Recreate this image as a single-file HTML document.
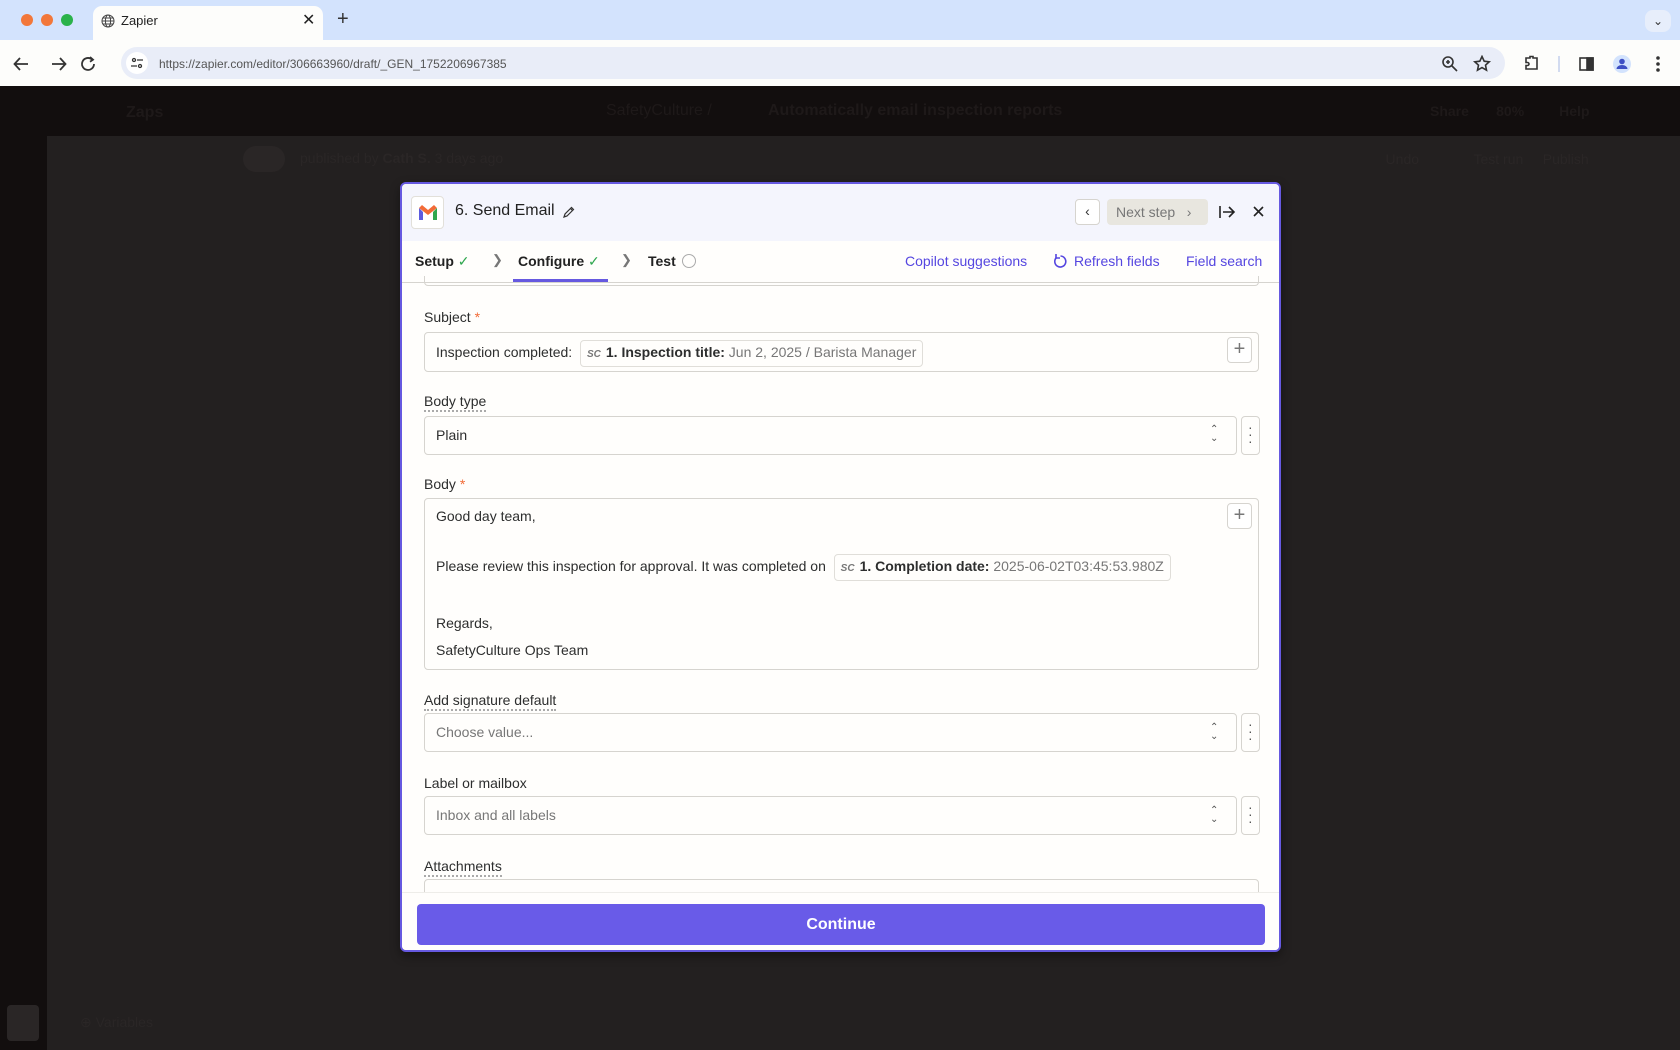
<!DOCTYPE html>
<html><head><meta charset="utf-8">
<style>
*{box-sizing:border-box;margin:0;padding:0}
body{width:1680px;height:1050px;overflow:hidden;font-family:"Liberation Sans",sans-serif;background:#232020;position:relative;color:#2d2e2e}
.abs{position:absolute}
.tabstrip{left:0;top:0;width:1680px;height:40px;background:#d3e3fd}
.tab{left:93px;top:6px;width:230px;height:34px;background:#fdfdfb;border-radius:9px 9px 0 0}
.dot{width:12px;height:12px;border-radius:50%;top:14px}
.toolbar{left:0;top:40px;width:1680px;height:46px;background:#fdfdfb}
.url{left:121px;top:47px;width:1384px;height:32px;background:#e9edf8;border-radius:16px}
.nav{left:0;top:86px;width:1680px;height:50px;background:#120e0e}
.side{left:0;top:86px;width:47px;height:964px;background:#120e0e}
.modal{left:400px;top:182px;width:881px;height:770px;background:#fffefc;border:2px solid #6659e0;border-radius:6px;overflow:hidden;box-shadow:0 4px 10px rgba(0,0,0,.4)}
.hdr{left:0;top:0;width:877px;height:57px;background:#f4f5fd}
.lbl{font-size:14px;color:#2d2e2e;left:22px}
.u{border-bottom:2px dotted #aaa;padding-bottom:1px}
.star{color:#f26b37}
.inp{left:22px;width:835px;border:1px solid #d6d4cf;border-radius:4px;background:#fffefc;font-size:14px}
.sel{width:813px}
.more{left:839px;width:19px;border:1px solid #d6d4cf;border-radius:4px;background:#fffefc}
.plus{width:25px;height:26px;border:1px solid #d6d4cf;border-radius:4px;background:#fff;color:#777;font-size:20px;line-height:22px;text-align:center}
.pill{display:inline-block;border:1px solid #e0ded9;border-radius:4px;padding:0 6px;font-size:14px;line-height:22px;background:#fffefc;vertical-align:middle}
.pill b{font-weight:bold;color:#2d2e2e}
.pill span{color:#777}
.sc{font-size:10px;font-weight:bold;font-style:italic;color:#3d3a8c;margin-right:5px}
.link{color:#5546e0;font-size:14px;top:69px}
.chev{color:#777;font-size:13px}
.bg{color:#1e1919}
</style></head><body>
<div class="abs tabstrip"></div>
<div class="abs dot" style="left:21px;background:#f2773a"></div>
<div class="abs dot" style="left:41px;background:#f2773a"></div>
<div class="abs dot" style="left:61px;background:#2ab24a"></div>
<div class="abs tab"></div>
<svg class="abs" style="left:101px;top:14px" width="14" height="14" viewBox="0 0 14 14" fill="none" stroke="#444" stroke-width="1"><circle cx="7" cy="7" r="6"/><ellipse cx="7" cy="7" rx="2.6" ry="6"/><path d="M1 7h12M2 4h10M2 10h10"/></svg>
<div class="abs" style="left:121px;top:13px;font-size:13px;color:#222">Zapier</div>
<div class="abs" style="left:302px;top:10px;font-size:16px;color:#222">✕</div>
<div class="abs" style="left:337px;top:8px;font-size:20px;color:#333">+</div>
<div class="abs" style="left:1645px;top:10px;width:26px;height:22px;border-radius:8px;background:#e7eefb;font-size:12px;text-align:center;line-height:22px;color:#333">⌄</div>
<div class="abs toolbar"></div>
<svg class="abs" style="left:12px;top:55px" width="100" height="18" viewBox="0 0 100 18" fill="none" stroke="#333" stroke-width="1.8"><path d="M16 9H3M8 3L2.5 9 8 15"/><path d="M40 9h13M48 3l5.5 6-5.5 6"/><path d="M80 4.5a6 6 0 1 0 2 4.5"/><path d="M78 2l3 2.7-3 2" /></svg>
<div class="abs url"></div>
<div class="abs" style="left:126px;top:52px;width:22px;height:22px;border-radius:50%;background:#fff"></div>
<svg class="abs" style="left:131px;top:57px" width="12" height="12" viewBox="0 0 12 12" fill="none" stroke="#333" stroke-width="1.3"><circle cx="3" cy="3" r="1.5"/><path d="M6 3h6M0 9h6"/><circle cx="9" cy="9" r="1.5"/></svg>
<div class="abs" style="left:159px;top:57px;font-size:12px;color:#555">https://zapier.com/editor/306663960/draft/_GEN_1752206967385</div>
<svg class="abs" style="left:1441px;top:55px" width="230" height="18" viewBox="0 0 230 18" fill="none" stroke="#333" stroke-width="1.6"><circle cx="7" cy="7" r="5"/><path d="M11 11l5 5M5 7h4M7 5v4"/><path d="M41 1.5l2.2 4.7 5 .6-3.7 3.4 1 5-4.5-2.6-4.5 2.6 1-5-3.7-3.4 5-.6z"/><path d="M85 3h4v-1.5h3V3h4v11h-11v-3.5h1.5a1.5 1.5 0 0 0 0-3H85z"/><path d="M118 1v16" stroke="#c8d3ee"/><rect x="139" y="3" width="13" height="12"/><rect x="146" y="3" width="6" height="12" fill="#333"/><circle cx="181" cy="9" r="9" fill="#d3e3fd" stroke="none"/><circle cx="181" cy="6.5" r="2.8" fill="#3d4fc4" stroke="none"/><path d="M175.5 14a5.5 4 0 0 1 11 0z" fill="#3d4fc4" stroke="none"/><circle cx="217" cy="3" r="1" fill="#333"/><circle cx="217" cy="9" r="1" fill="#333"/><circle cx="217" cy="15" r="1" fill="#333"/></svg>

<div class="abs nav"></div>
<div class="abs side"></div>
<div class="abs" style="left:48px;top:137px;width:1632px;height:913px;background:#232020"></div>
<div class="abs bg" style="left:126px;top:104px;font-size:16px;font-weight:bold">Zaps</div>
<div class="abs bg" style="left:606px;top:102px;font-size:16px">SafetyCulture /</div>
<div class="abs bg" style="left:768px;top:102px;font-size:16px;font-weight:bold">Automatically email inspection reports</div>
<div class="abs bg" style="left:1430px;top:103px;font-size:14px;font-weight:bold">Share &nbsp;&nbsp;&nbsp;&nbsp;&nbsp; 80% &nbsp;&nbsp;&nbsp;&nbsp;&nbsp;&nbsp;&nbsp; Help</div>
<div class="abs" style="left:1370px;top:151px;width:290px;height:26px;font-size:14px;color:#2a2626">&nbsp;&nbsp;&nbsp;&nbsp;Undo&nbsp;&nbsp;&nbsp;&nbsp;&nbsp;&nbsp;&nbsp;&nbsp;&nbsp;&nbsp;&nbsp;&nbsp;&nbsp;&nbsp;Test run&nbsp;&nbsp;&nbsp;&nbsp; Publish</div>
<div class="abs" style="left:243px;top:146px;width:42px;height:26px;border-radius:13px;background:#2a2626"></div>
<div class="abs" style="left:300px;top:150px;font-size:14px;color:#2a2626">published by <b>Cath S.</b> 3 days ago</div>
<div class="abs" style="left:7px;top:1005px;width:32px;height:36px;border-radius:4px;background:#2a2626"></div>
<div class="abs" style="left:80px;top:1014px;font-size:14px;color:#2a2626">⊕ Variables</div>

<div class="abs modal">
 <div class="abs hdr"></div>
 <div class="abs" style="left:9px;top:12px;width:33px;height:33px;border:1px solid #e2e0da;border-radius:4px;background:#fff"></div>
 <svg class="abs" style="left:16px;top:20px" width="20" height="17" viewBox="0 0 20 17"><path d="M1 4v12h4V8z" fill="#5d5bdf"/><path d="M15 8v8h4V4z" fill="#2fa74f"/><path d="M1 4l3-3 6 5 6-5 3 3-9 7z" fill="#f26b37"/></svg>
 <div class="abs" style="left:53px;top:18px;font-size:16px;color:#222">6. Send Email</div>
 <svg class="abs" style="left:160px;top:22px" width="13" height="13" viewBox="0 0 13 13" fill="none" stroke="#333" stroke-width="1.2"><path d="M2 11l1-3 6.5-6.5 2 2L5 10z"/><path d="M8.5 2.5l2 2"/></svg>
 <div class="abs" style="left:673px;top:15px;width:25px;height:26px;border:1px solid #d6d4cf;border-radius:4px;background:#fff;text-align:center;line-height:23px;font-size:14px;color:#333">‹</div>
 <div class="abs" style="left:705px;top:15px;width:101px;height:26px;border-radius:4px;background:#e8e6df;font-size:14px;color:#777;line-height:26px;padding-left:9px">Next step &nbsp;&nbsp;›</div>
 <svg class="abs" style="left:816px;top:20px" width="18" height="16" viewBox="0 0 18 16" fill="none" stroke="#222" stroke-width="1.6"><path d="M2 2v12M5 8h11M11 3l5 5-5 5"/></svg>
 <svg class="abs" style="left:851px;top:22px" width="11" height="11" viewBox="0 0 11 11" stroke="#222" stroke-width="1.6"><path d="M1 1l9 9M10 1l-9 9"/></svg>

 <div class="abs" style="left:13px;top:69px;font-size:14px;font-weight:bold;color:#222">Setup <span style="color:#2fa74f;font-weight:normal">✓</span></div>
 <div class="abs chev" style="left:90px;top:68px">❯</div>
 <div class="abs" style="left:116px;top:69px;font-size:14px;font-weight:bold;color:#222">Configure <span style="color:#2fa74f;font-weight:normal">✓</span></div>
 <div class="abs chev" style="left:219px;top:68px">❯</div>
 <div class="abs" style="left:246px;top:69px;font-size:14px;font-weight:bold;color:#222">Test</div>
 <div class="abs" style="left:280px;top:70px;width:14px;height:14px;border:1.5px solid #aaa;border-radius:50%"></div>
 <div class="abs" style="left:111px;top:95px;width:95px;height:3px;background:#6659e0"></div>
 <div class="abs" style="left:0;top:98px;width:877px;height:1px;background:#d6d4cf"></div>
 <div class="abs link" style="left:503px">Copilot suggestions</div>
 <svg class="abs" style="left:651px;top:69px" width="15" height="16" viewBox="0 0 15 16" fill="none" stroke="#5546e0" stroke-width="1.6"><path d="M3.5 4.5a5.5 5.5 0 1 0 4-1.5"/><path d="M3 1v4h4"/></svg>
 <div class="abs link" style="left:672px">Refresh fields</div>
 <div class="abs link" style="left:784px">Field search</div>
 <div class="abs" style="left:22px;top:92px;width:835px;height:10px;border:1px solid #d6d4cf;border-top:none;border-radius:0 0 4px 4px"></div>

 <div class="abs lbl" style="top:125px">Subject <span class="star">*</span></div>
 <div class="abs inp" style="top:148px;height:40px"></div>
 <div class="abs" style="left:34px;top:156px;font-size:14px;line-height:24px">Inspection completed: &nbsp;<span class="pill"><span class="sc">SC</span><b>1. Inspection title:</b> <span>Jun 2, 2025 / Barista Manager</span></span></div>
 <div class="abs plus" style="left:825px;top:153px">+</div>

 <div class="abs lbl" style="top:209px"><span class="u">Body type</span></div>
 <div class="abs inp sel" style="top:232px;height:39px"></div>
 <div class="abs" style="left:34px;top:243px;font-size:14px">Plain</div>
 <div class="abs" style="left:808px;top:241px;font-size:10px;line-height:9px;color:#555">⌃<br>⌄</div>
 <div class="abs more" style="left:839px;top:232px;height:39px"></div>
 <div class="abs" style="left:846px;top:240px;font-size:14px;line-height:7px;color:#555">·<br>·<br>·</div>

 <div class="abs lbl" style="top:292px">Body <span class="star">*</span></div>
 <div class="abs inp" style="top:314px;height:172px"></div>
 <div class="abs plus" style="left:825px;top:319px">+</div>
 <div class="abs" style="left:34px;top:324px;font-size:14px">Good day team,</div>
 <div class="abs" style="left:34px;top:370px;font-size:14px;line-height:24px">Please review this inspection for approval. It was completed on &nbsp;<span class="pill"><span class="sc">SC</span><b>1. Completion date:</b> <span>2025-06-02T03:45:53.980Z</span></span></div>
 <div class="abs" style="left:34px;top:431px;font-size:14px">Regards,</div>
 <div class="abs" style="left:34px;top:458px;font-size:14px">SafetyCulture Ops Team</div>

 <div class="abs lbl" style="top:508px"><span class="u">Add signature default</span></div>
 <div class="abs inp sel" style="top:529px;height:39px"></div>
 <div class="abs" style="left:34px;top:540px;font-size:14px;color:#777">Choose value...</div>
 <div class="abs" style="left:808px;top:539px;font-size:10px;line-height:9px;color:#555">⌃<br>⌄</div>
 <div class="abs more" style="top:529px;height:39px"></div>
 <div class="abs" style="left:846px;top:537px;font-size:14px;line-height:7px;color:#555">·<br>·<br>·</div>

 <div class="abs lbl" style="top:591px">Label or mailbox</div>
 <div class="abs inp sel" style="top:612px;height:39px"></div>
 <div class="abs" style="left:34px;top:623px;font-size:14px;color:#777">Inbox and all labels</div>
 <div class="abs" style="left:808px;top:622px;font-size:10px;line-height:9px;color:#555">⌃<br>⌄</div>
 <div class="abs more" style="top:612px;height:39px"></div>
 <div class="abs" style="left:846px;top:620px;font-size:14px;line-height:7px;color:#555">·<br>·<br>·</div>

 <div class="abs lbl" style="top:674px"><span class="u">Attachments</span></div>
 <div class="abs inp" style="top:695px;height:30px"></div>

 <div class="abs" style="left:0;top:708px;width:877px;height:60px;background:#fffefc;border-top:1px solid #eeede9"></div>
 <div class="abs" style="left:15px;top:720px;width:848px;height:41px;background:#695be8;border-radius:4px;color:#fff;font-size:16px;font-weight:bold;text-align:center;line-height:41px">Continue</div>
</div>
</body></html>
